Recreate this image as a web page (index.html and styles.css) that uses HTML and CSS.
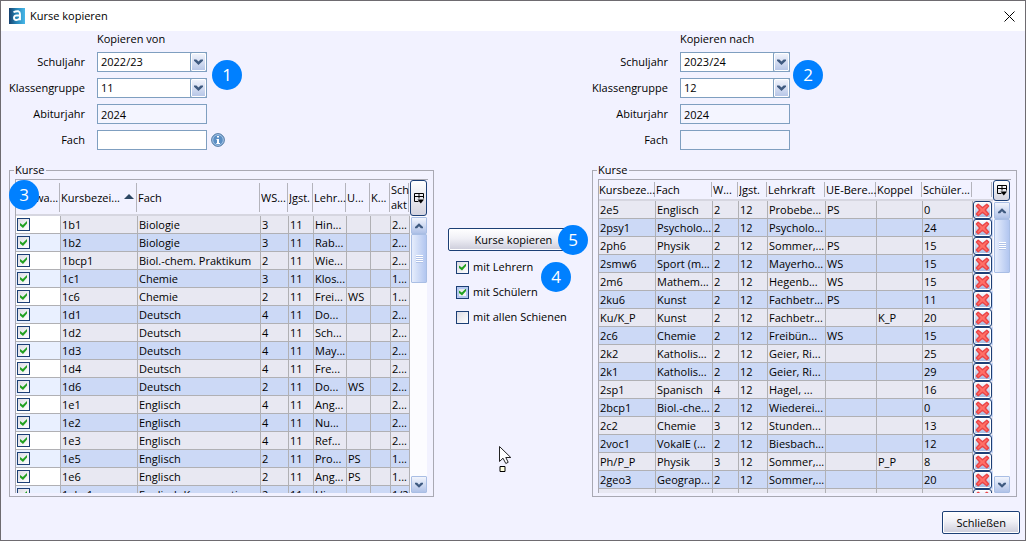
FILE: index.html
```
<!DOCTYPE html>
<html lang="de">
<head>
<meta charset="utf-8">
<title>Kurse kopieren</title>
<link rel="stylesheet" href="styles.css">
</head>
<body>
<svg class="defs" aria-hidden="true">
  <symbol id="chev-down" viewBox="0 0 9 6"><path d="M0 .5h2.400L4.500 2.600 6.600 .5H9v1.300L4.500 6 0 1.800z"/></symbol>
  <symbol id="chev-up" viewBox="0 0 9 6"><path d="M0 5.500h2.400L4.500 3.400 6.600 5.500H9V4.200L4.500 0 0 4.200z"/></symbol>
  <symbol id="cross" viewBox="0 0 15 14"><path d="M3.200 1.200L7.500 4.700 11.800 1.200 13.600 3 10.200 7l3.400 4-1.800 1.800L7.500 9.300 3.200 12.800 1.400 11l3.400-4L1.400 3z" fill="#ff6f66" stroke="#ea4446" stroke-width="1.400" stroke-linejoin="round"/></symbol>
  <symbol id="colctl" viewBox="0 0 10 11"><path d="M.5 .5h9v5M.5 .5v8h4M.5 3.500h9M5 .5v5" fill="none" stroke="#000"/><path d="M3.500 6.500h6.500L6.800 10.500z"/></symbol>
</svg>
<header class="titlebar">
  <svg class="logo" viewBox="0 0 16 16" aria-hidden="true">
    <defs><linearGradient id="lg"><stop offset="0" stop-color="#17426f"/><stop offset=".45" stop-color="#2583b4"/><stop offset="1" stop-color="#48b8ea"/></linearGradient></defs>
    <rect width="16" height="16" fill="url(#lg)"/>
    <path d="M4.500 4.300Q7 2.800 9.400 3.300 11 3.800 11 6v6.300M11 7.500H7.500Q5 7.600 5 9.800 5 12 7.300 12 9.800 12 11 10" fill="none" stroke="#fff" stroke-width="1.900"/>
  </svg>
  <h1>Kurse kopieren</h1>
  <button class="close" aria-label="Fenster schließen"><svg viewBox="0 0 11 11"><path d="M.5 .5l10 10M10.500 .5l-10 10" stroke="#000" fill="none"/></svg></button>
</header>
<main class="content">
  <form class="form from">
    <h2>Kopieren von</h2>
    <label for="sj1">Schuljahr</label>
    <span class="combo"><select id="sj1"><option>2022/23</option></select><svg><use href="#chev-down"/></svg><b class="badge beside">1</b></span>
    <label for="kg1">Klassengruppe</label>
    <span class="combo"><select id="kg1"><option>11</option></select><svg><use href="#chev-down"/></svg></span>
    <label for="aj1">Abiturjahr</label>
    <input id="aj1" value="2024" readonly>
    <label for="f1">Fach</label>
    <span class="with-info"><input id="f1"><svg class="info" viewBox="0 0 14 14"><circle cx="7" cy="7" r="6.400" fill="#5b8fc4" stroke="#5f82a8"/><circle cx="7" cy="7" r="5.300" fill="none" stroke="#a8c6e6"/><path d="M6 3h2v1.600H6zM5.500 6H8v4h1v1H5.300v-1H6V7h-.5z" fill="#fff"/></svg></span>
  </form>
  <form class="form to">
    <h2>Kopieren nach</h2>
    <label for="sj2">Schuljahr</label>
    <span class="combo"><select id="sj2"><option>2023/24</option></select><svg><use href="#chev-down"/></svg><b class="badge beside">2</b></span>
    <label for="kg2">Klassengruppe</label>
    <span class="combo"><select id="kg2"><option>12</option></select><svg><use href="#chev-down"/></svg></span>
    <label for="aj2">Abiturjahr</label>
    <input id="aj2" value="2024" readonly>
    <label for="f2">Fach</label>
    <input id="f2" readonly>
  </form>
  <fieldset class="panel source">
    <legend>Kurse</legend>
    <b class="badge on-table">3</b>
    <div class="grid">
      <div class="viewport">
        <table class="tall">
          <colgroup><col class="w45"><col class="w77"><col><col class="w28"><col class="w25"><col class="w33"><col class="w24"><col class="w20"><col class="w19"></colgroup>
          <thead><tr><th>Auswa...</th><th class="sorted">Kursbezei...<i></i></th><th>Fach</th><th>WS...</th><th>Jgst.</th><th>Lehr...</th><th>U...</th><th>K...</th><th>Sch<br>akt</th></tr></thead>
          <tbody id="src"></tbody>
        </table>
      </div>
      <div class="side">
        <button class="colctl tall" aria-label="Spalten wählen"><svg><use href="#colctl"/></svg></button>
        <div class="scrollbar"><button aria-label="Nach oben"><svg><use href="#chev-up"/></svg></button><span class="thumb"></span><button class="down" aria-label="Nach unten"><svg><use href="#chev-down"/></svg></button></div>
      </div>
    </div>
  </fieldset>
  <div class="actions">
    <button class="btn copy">Kurse kopieren<b class="badge on-button">5</b></button>
    <div class="options">
      <label><input type="checkbox" checked>mit Lehrern</label>
      <label><input type="checkbox" class="hot" checked>mit Schülern</label>
      <label><input type="checkbox">mit allen Schienen</label>
      <b class="badge on-options">4</b>
    </div>
    <svg class="pointer" viewBox="0 0 13 27" aria-hidden="true"><path d="M.5 .5v15l3.500-3.300 2.800 5.300 2.400-1.200L6.800 11.500h5z" fill="#fff" stroke="#222"/><path d="M1 20.500h5v5H1z" fill="#ffffe0" stroke="#000"/></svg>
  </div>
  <fieldset class="panel target">
    <legend>Kurse</legend>
    <div class="grid">
      <div class="viewport">
        <table>
          <colgroup><col class="w57"><col><col class="w26"><col class="w29"><col class="w58"><col class="w51"><col class="w46"><col class="w50"><col class="w20"></colgroup>
          <thead><tr><th>Kursbeze...</th><th>Fach</th><th>W...</th><th>Jgst.</th><th>Lehrkraft</th><th>UE-Bere...</th><th>Koppel</th><th>Schüler...</th><th></th></tr></thead>
          <tbody id="dst"></tbody>
        </table>
      </div>
      <div class="side">
        <button class="colctl" aria-label="Spalten wählen"><svg><use href="#colctl"/></svg></button>
        <div class="scrollbar"><button aria-label="Nach oben"><svg><use href="#chev-up"/></svg></button><span class="thumb long"></span><button class="down" aria-label="Nach unten"><svg><use href="#chev-down"/></svg></button></div>
      </div>
    </div>
  </fieldset>
</main>
<footer class="footer"><button class="btn">Schließen</button></footer>
<script src="app.js"></script>
</body>
</html>
```
FILE: styles.css
```
* { box-sizing: border-box; }
body {
  position: relative;
  margin: 0;
  height: 100vh;
  display: flex;
  flex-direction: column;
  border: 1px solid #6e6b70;
  background: #f2f2ff;
  color: #000;
  font: 11px/14px "Open Sans", "Noto Sans", sans-serif;
}
/* sliver of the parent window's toolbar behind the dialog */
body::before {
  content: "";
  position: absolute;
  top: -1px;
  left: 402px;
  width: 138px;
  height: 1px;
  background: #14665a;
}
button, input, select { font: inherit; color: inherit; margin: 0; }
h1, h2 { margin: 0; font-size: 11px; font-weight: 400; }
.defs { position: absolute; width: 0; height: 0; }

.titlebar {
  display: flex;
  align-items: center;
  height: 30px;
  flex: none;
  padding: 0 10px 0 8px;
  background: #fff;
}
.titlebar h1 { flex: 1; margin-left: 5px; }
.logo { width: 16px; height: 16px; }
.close { border: 0; padding: 0; background: none; display: flex; }
.close svg { width: 11px; height: 11px; }

.content {
  flex: 1;
  min-height: 0;
  display: grid;
  grid-template-columns: 1fr 158px 1fr;
  grid-template-rows: auto 1fr;
  row-gap: 13px;
  padding: 0 8px;
}
.form {
  display: grid;
  grid-template-columns: 76px 110px;
  grid-template-rows: 15px repeat(4, 20px);
  gap: 6px 12px;
  align-items: center;
}
.from { grid-column: 1; }
.to { grid-column: 3; }
.form h2 { grid-column: 2; }
.form label { text-align: right; white-space: nowrap; }
.form input, .form select {
  width: 110px;
  height: 20px;
  padding: 0 3px;
  border: 1px solid #7f9fc0;
  border-radius: 0;
  background: #fff;
  outline: 0;
}
.form input[readonly] { background: #f4f5ff; }
.combo { position: relative; }
.combo select { display: block; appearance: none; }
.combo svg {
  position: absolute;
  top: 0;
  right: 0;
  width: 17px;
  height: 20px;
  padding: 6px 3px;
  fill: #3f5a80;
  border: 1px solid #7f9fc0;
  border-radius: 2px;
  box-shadow: inset 0 0 0 1px #fff;
  background: linear-gradient(#f4f6fd, #b4c4e6);
  pointer-events: none;
}
.with-info { display: flex; align-items: center; gap: 4px; }
.info { flex: none; width: 14px; height: 14px; }

.badge {
  position: absolute;
  z-index: 2;
  width: 30px;
  height: 30px;
  border-radius: 50%;
  background: #0080ff;
  color: #fff;
  font: 17px/30px "Open Sans", sans-serif;
  text-align: center;
}
.beside { left: 115px; top: 8px; }
.to .beside { left: 113px; }
.on-table { left: -1px; top: 3px; }
.on-button { right: -10px; top: -4px; }
.on-options { left: 93px; top: 11px; }

.panel {
  position: relative;
  display: flex;
  flex-direction: column;
  min-width: 0;
  min-height: 0;
  margin: 0;
  padding: 2px 5px 3px;
  border: 1px solid #a9a9b3;
}
.panel legend { padding: 0 2px 0 1px; margin-left: -1px; height: 14px; }
.grid {
  flex: 1;
  min-height: 0;
  display: grid;
  grid-template-columns: 1fr 18px;
  grid-template-rows: 100%;
  border-top: 1px solid #a9a9b3;
  border-left: 1px solid #a9a9b3;
}
.viewport { overflow: hidden; min-width: 0; }
table { width: 100%; table-layout: fixed; border-spacing: 0; }
th {
  height: 21px;
  padding: 0;
  font-weight: 400;
  text-align: left;
  white-space: nowrap;
  overflow: hidden;
  line-height: 15px;
  border-bottom: 2px solid #d6d6e0;
  background: linear-gradient(#b4b4bc, #b4b4bc) right 1px center / 1px 15px no-repeat;
}
.tall th { height: 36px; background-size: 1px 29px; }
.sorted { position: relative; }
.sorted i {
  position: absolute;
  right: 4px;
  top: 14px;
  border: solid transparent;
  border-width: 0 5px 5px;
  border-bottom-color: #2c4763;
}
td {
  height: 18px;
  padding: 0 0 0 1px;
  line-height: 17px;
  white-space: nowrap;
  overflow: hidden;
  border-right: 1px solid #b0b0b4;
  border-bottom: 1px solid #b0b0b4;
  background: #e8e8f2;
}
tr:nth-child(even) td { background: #ccd9f6; }
td.pick { background: #fff; }
tr:nth-child(even) td.pick { background: #e9f0ff; }
td input { display: block; }
td.del { padding: 0; border: 0; }
.del button {
  display: flex;
  width: 19px;
  height: 18px;
  padding: 1px;
  border: 1px solid #1c3f75;
  border-radius: 3px;
  box-shadow: inset 0 0 0 1px #fff;
  background: linear-gradient(#fff, #9fb6e0);
}
.del svg { width: 15px; height: 14px; }
.w19 { width: 19px; } .w20 { width: 20px; } .w24 { width: 24px; } .w25 { width: 25px; }
.w26 { width: 26px; } .w28 { width: 28px; } .w29 { width: 29px; } .w33 { width: 33px; }
.w45 { width: 45px; } .w46 { width: 46px; } .w50 { width: 50px; } .w51 { width: 51px; }
.w57 { width: 57px; } .w58 { width: 58px; } .w77 { width: 77px; }

input[type="checkbox"] {
  appearance: none;
  flex: none;
  width: 13px;
  height: 13px;
  border: 1px solid #1c3f75;
  background: linear-gradient(135deg, #dcdce4, #fff);
}
input.hot { box-shadow: inset 0 0 0 2px #b4c8f0; }
input[type="checkbox"]:checked::after {
  content: "";
  display: block;
  width: 7px;
  height: 7px;
  margin: 2px;
  background: #21a121;
  clip-path: polygon(0 30%, 40% 58%, 100% 0, 100% 36%, 43% 100%, 0 64%);
}

.side { display: flex; flex-direction: column; padding-right: 1px; }
.colctl {
  flex: none;
  display: flex;
  align-items: center;
  justify-content: center;
  height: 21px;
  padding: 0;
  border: 1px solid #1c3f75;
  border-radius: 3px;
  background: linear-gradient(#fff, #d4d4e0);
}
.colctl.tall { height: 36px; }
.colctl svg { width: 10px; height: 11px; }
.scrollbar {
  flex: 1;
  display: flex;
  flex-direction: column;
  padding: 1px 0 0 1px;
  background: #fcfcff;
}
.scrollbar button {
  width: 16px;
  height: 17px;
  padding: 0 3px;
  display: flex;
  align-items: center;
  border: 1px solid #a9bee4;
  border-radius: 1px;
  background: linear-gradient(#f2f5fd, #b0c2e8);
}
.scrollbar .down { margin-top: auto; }
.scrollbar svg { width: 9px; height: 6px; fill: #3f5a80; }
.thumb {
  height: 49px;
  border: 1px solid #a9bee4;
  border-radius: 1px;
  background:
    repeating-linear-gradient(#fff 0 1px, #b0c2e8 1px 2px) center / 7px 8px no-repeat,
    linear-gradient(90deg, #e6edfc, #b2c6f0);
}
.thumb.long { height: 54px; }

.actions { position: relative; padding: 65px 13px 0 14px; }
.btn {
  height: 23px;
  padding: 0 13px;
  border: 1px solid #1c3f75;
  border-radius: 2px;
  box-shadow: inset 0 0 0 1px #fff;
  background: linear-gradient(#fff, #f0f0f6 45%, #ccccda);
}
.copy { position: relative; width: 100%; }
.options {
  position: relative;
  display: flex;
  flex-direction: column;
  gap: 11px;
  padding: 9px 0 0 8px;
}
.options label { display: flex; align-items: center; gap: 4px; white-space: nowrap; }
.pointer { position: absolute; left: 65px; top: 283px; width: 13px; height: 27px; }

.footer { display: flex; justify-content: flex-end; padding: 14px 5px 6px; }
```
FILE: app.js
```
const source = `1b1|Biologie|3|11|Hin...|||2...
1b2|Biologie|3|11|Rab...|||2...
1bcp1|Biol.-chem. Praktikum|2|11|Wie...|||2...
1c1|Chemie|3|11|Klos...|||1...
1c6|Chemie|2|11|Frei...|WS||1...
1d1|Deutsch|4|11|Do...|||2...
1d2|Deutsch|4|11|Sch...|||2...
1d3|Deutsch|4|11|May...|||2...
1d4|Deutsch|4|11|Fre...|||2...
1d6|Deutsch|2|11|Do...|WS||2...
1e1|Englisch|4|11|Ang...|||2...
1e2|Englisch|4|11|Nu...|||2...
1e3|Englisch|4|11|Ref...|||2...
1e5|Englisch|2|11|Pro...|PS||1...
1e6|Englisch|2|11|Ang...|PS||1...
1eko1|Englisch Konversation|2|11|Hin...|||1/2`;
const target = `2e5|Englisch|2|12|Probebe...|PS||0
2psy1|Psycholo...|2|12|Psycholo...|||24
2ph6|Physik|2|12|Sommer,...|PS||15
2smw6|Sport (m...|2|12|Mayerho...|WS||15
2m6|Mathem...|2|12|Hegenb...|WS||15
2ku6|Kunst|2|12|Fachbetr...|PS||11
Ku/K_P|Kunst|2|12|Fachbetr...||K_P|20
2c6|Chemie|2|12|Freibün...|WS||15
2k2|Katholis...|2|12|Geier, Ri...|||25
2k1|Katholis...|2|12|Geier, Ri...|||29
2sp1|Spanisch|4|12|Hagel, ...|||16
2bcp1|Biol.-che...|2|12|Wiederei...|||0
2c2|Chemie|3|12|Stunden...|||13
2voc1|VokalE (...|2|12|Biesbach...|||12
Ph/P_P|Physik|3|12|Sommer,...||P_P|8
2geo3|Geograp...|2|12|Sommer,...|||20
|||||||`;
const cells = line => line.split("|").map(t => `<td>${t}</td>`).join("");
document.getElementById("src").innerHTML = source.split("\n").map(l =>
  `<tr><td class="pick"><input type="checkbox" checked aria-label="${l.split("|")[0]}"></td>${cells(l)}</tr>`).join("");
document.getElementById("dst").innerHTML = target.split("\n").map(l =>
  `<tr>${cells(l)}<td class="del"><button aria-label="Löschen"><svg><use href="#cross"/></svg></button></td></tr>`).join("");
```
